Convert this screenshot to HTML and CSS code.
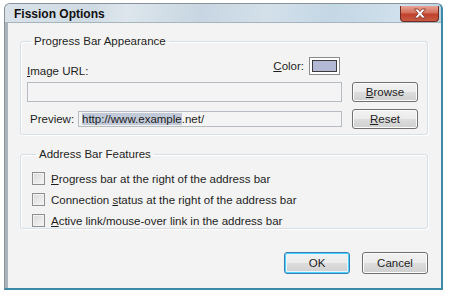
FILE: index.html
```html
<!DOCTYPE html>
<html lang="en">
<head>
  <meta charset="UTF-8" />
  <title>Fission Options</title>
  <link rel="stylesheet" href="styles.css">
</head>
<body>

  <div class="window">
    <div class="titlebar">
      <span class="title">Fission Options</span>
      <span class="close">
        <svg width="16" height="11" viewBox="0 0 16 11">
          <path d="M2.5 1 L6 1 L8 3.6 L10 1 L13.5 1 L9.8 5.5 L13.5 10 L10 10 L8 7.4 L6 10 L2.5 10 L6.2 5.5 Z" fill="#fff" stroke="#7a2a1e" stroke-width="0.8" stroke-linejoin="round"/>
        </svg>
      </span>
    </div>

    <div class="client">
      <fieldset class="group group-progress">
        <legend>Progress Bar Appearance</legend>

        <div class="row row-labels">
          <label class="url-label"><u>I</u>mage URL:</label>
          <div class="color">
            <label><u>C</u>olor:</label>
            <span class="swatch"><span class="swatch-fill"></span></span>
          </div>
        </div>

        <div class="row row-url">
          <div class="textbox"></div>
          <button class="btn"><u>B</u>rowse</button>
        </div>

        <div class="row row-preview">
          <label class="preview-label">Preview:</label>
          <div class="textbox preview"><span class="sel">http://www.example</span>.net/</div>
          <button class="btn"><u>R</u>eset</button>
        </div>
      </fieldset>

      <fieldset class="group group-address">
        <legend>Address Bar Features</legend>
        <label class="check"><span class="box"></span><span><u>P</u>rogress bar at the right of the address bar</span></label>
        <label class="check"><span class="box"></span><span>Connection <u>s</u>tatus at the right of the address bar</span></label>
        <label class="check"><span class="box"></span><span><u>A</u>ctive link/mouse-over link in the address bar</span></label>
      </fieldset>

      <div class="actions">
        <button class="btn btn-default">OK</button>
        <button class="btn">Cancel</button>
      </div>
    </div>
  </div>

</body>
</html>
```

FILE: styles.css
```css
body {
  margin: 0;
  background: #fff;
  font-family: 'Liberation Sans', Arial, sans-serif;
  font-size: 11.5px;
  color: #1e1e1e;
}

.window {
  margin: 3px 0 0 4px;
  width: 439px;
  height: 287px;
  box-sizing: border-box;
  border-radius: 6px 6px 0 0;
  border-top: 1px solid #8a9199;
  border-left: 1px solid #8a9199;
  border-right: 2px solid #3d8aa8;
  border-bottom: 2px solid #3d8aa8;
  background: linear-gradient(to right, #a9b3bb, #c9d5de 30%, #b5c8d6 70%, #a9c6d6);
  display: flex;
  flex-direction: column;
  overflow: hidden;
  box-shadow: 0 1px 0 #3a4a55;
}

.titlebar {
  height: 18px;
  display: flex;
  align-items: center;
  justify-content: space-between;
  padding: 0 2px 0 9px;
  background: linear-gradient(100deg, #d9e2e9 0%, #cfdbe4 20%, #dde6ec 28%, #c7d6e2 45%, #d3e0ea 60%, #c4d7e5 75%, #d0e0ec 90%, #bcd3e2 100%);
}
.title {
  font-weight: bold;
  font-size: 12px;
  color: #111;
  margin-top: 2px;
}
.close {
  width: 39px;
  height: 16px;
  box-sizing: border-box;
  margin-top: 1px;
  border: 1px solid #6b2a22;
  border-top: none;
  border-radius: 0 0 4px 4px;
  background: linear-gradient(to bottom, #e7a597 0%, #d46e5c 45%, #c0402a 55%, #c85c45 100%);
  display: flex;
  align-items: center;
  justify-content: center;
}

.client {
  flex: 1;
  margin-left: 3px;
  background: #f3f3f3;
  border-top: 1px solid #a6b4be;
  display: flex;
  flex-direction: column;
  padding: 12px 13px 0 12px;
}

.group {
  margin: 0;
  border: 1px solid #d5dfe5;
  border-radius: 3px;
  box-shadow: inset 1px 1px 0 #fff, 1px 1px 0 #fff;
  padding: 0 9px 0 6px;
}
.group legend {
  padding: 0 3px;
  margin-left: 4px;
  color: #1e1e1e;
}

.group-progress {
  height: 100px;
  box-sizing: border-box;
  padding-top: 3px;
}

.row {
  display: flex;
  align-items: center;
}
.row-labels {
  justify-content: space-between;
  align-items: flex-end;
  height: 28px;
}
.url-label {
  margin-bottom: 1px;
}
.color {
  display: flex;
  align-items: center;
  gap: 5px;
  margin-right: 78px;
  margin-bottom: 3px;
}
.swatch {
  width: 31px;
  height: 18px;
  box-sizing: border-box;
  border: 1px solid #8b8b8b;
  background: #fff;
  padding: 2px;
  display: flex;
}
.swatch-fill {
  flex: 1;
  background: #b3b8d4;
  border: 1px solid #3b3b3b;
}

.row-url {
  margin-top: 4px;
}
.textbox {
  flex: 1;
  height: 20px;
  box-sizing: border-box;
  border: 1px solid #b6bcc2;
  background: #f4f4f4;
}
.row-url .btn {
  margin-left: 10px;
}

.row-preview {
  margin-top: 7px;
}
.preview-label {
  width: 51px;
  padding-left: 3px;
  box-sizing: border-box;
}
.textbox.preview {
  height: 16px;
  line-height: 14px;
  padding-left: 3px;
  white-space: nowrap;
}
.sel {
  background: #c2c9d8;
}
.row-preview .btn {
  margin-left: 10px;
}

.btn {
  width: 66px;
  height: 20px;
  padding: 0;
  font-family: inherit;
  font-size: inherit;
  color: #1e1e1e;
  border: 1px solid #707070;
  border-radius: 3px;
  background: linear-gradient(to bottom, #f2f2f2 0%, #ebebeb 50%, #dddddd 51%, #cfcfcf 100%);
  box-shadow: inset 0 0 0 1px #fcfcfc;
}

.group-address {
  margin-top: 13px;
  height: 81px;
  box-sizing: border-box;
  padding: 8px 0 0 11px;
}
.check {
  display: flex;
  align-items: center;
  gap: 6px;
  height: 21px;
}
.box {
  width: 13px;
  height: 13px;
  box-sizing: border-box;
  border: 1px solid #8f8f8f;
  background: linear-gradient(135deg, #d9d9d9, #f6f6f6);
  box-shadow: inset 0 0 0 1px #f2f2f2;
}

.actions {
  display: flex;
  justify-content: flex-end;
  gap: 12px;
  margin-top: 23px;
}
.actions .btn {
  height: 22px;
}
.btn-default {
  border-color: #3c7fb1;
  box-shadow: inset 0 0 0 1px #48d1fd, inset 0 0 0 2px #eaf6fd;
}
```
